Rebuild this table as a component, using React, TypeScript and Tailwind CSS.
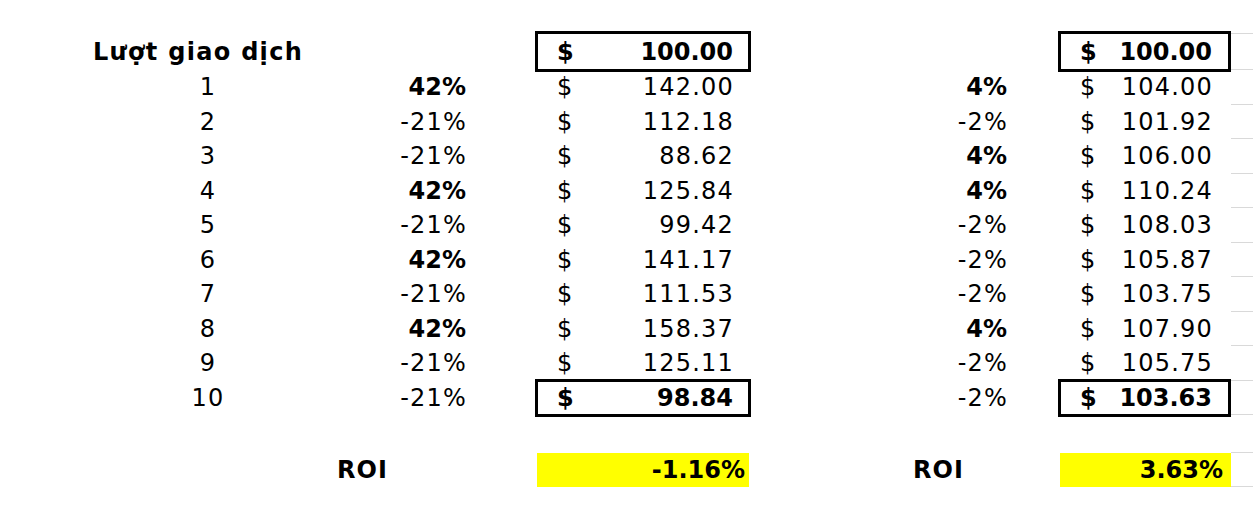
const leftPct = [42, -21, -21, 42, -21, 42, -21, 42, -21, -21];
const leftVal = ["142.00", "112.18", "88.62", "125.84", "99.42", "141.17", "111.53", "158.37", "125.11", "98.84"];
const rightPct = [4, -2, 4, 4, -2, -2, -2, 4, -2, -2];
const rightVal = ["104.00", "101.92", "106.00", "110.24", "108.03", "105.87", "103.75", "107.90", "105.75", "103.63"];

const Grid = () => <div className="border-b border-[#d9d9d9]" />;

const MoneyCell = ({ value, boxed, side }: { value: string; boxed: boolean; side: "l" | "r" }) => {
  let pad = "";
  if (side === "l") pad = boxed ? "pl-[19px] pr-[15px]" : "pl-[19px] pr-[14px]";
  else pad = boxed ? "pl-[19px] pr-[16px]" : "pl-[19px] pr-[15px]";
  return (
    <div
      className={`flex items-center justify-between border-[3px] ${pad} ${
        boxed ? "border-black -my-[2px] font-bold" : "border-transparent tracking-[1.2px]"
      }`}
    >
      <span>$</span>
      <span>{value}</span>
    </div>
  );
};

export default function App() {
  return (
    <div className="w-[1253px] h-[513px] bg-white overflow-hidden pt-[33px] text-black text-[24px] font-['DejaVu_Sans',sans-serif]">
      <div className="grid grid-cols-[93px_230px_212px_216px_307px_173px_22px] grid-rows-[37px_repeat(10,34.5px)_38px_34px]">
        {/* header row */}
        <div />
        <div className="flex items-center font-bold tracking-[1.3px] whitespace-nowrap">Lượt giao dịch</div>
        <div />
        <MoneyCell value="100.00" boxed side="l" />
        <div />
        <MoneyCell value="100.00" boxed side="r" />
        <div className="border-y border-[#d9d9d9]" />

        {leftVal.map((v, i) => (
          <div key={i} className="contents">
            <div />
            <div className="flex items-center justify-center tracking-[1.2px]">{i + 1}</div>
            <div
              className={`flex items-center justify-end ${
                leftPct[i] > 0 ? "font-bold pr-[69px]" : "tracking-[1.2px] pr-[68px]"
              }`}
            >
              {leftPct[i]}%
            </div>
            <MoneyCell value={v} boxed={i === 9} side="l" />
            <div
              className={`flex items-center justify-end ${
                rightPct[i] > 0 ? "font-bold pr-[51px]" : "tracking-[1.2px] pr-[50px]"
              }`}
            >
              {rightPct[i]}%
            </div>
            <MoneyCell value={rightVal[i]} boxed={i === 9} side="r" />
            <Grid />
          </div>
        ))}

        {/* empty row */}
        <div />
        <div />
        <div />
        <div />
        <div />
        <div />
        <Grid />

        {/* ROI row */}
        <div />
        <div />
        <div className="flex items-center pl-[14px] font-bold tracking-[1px]">ROI</div>
        <div className="flex items-center justify-end bg-[#ffff00] mx-[2px] pr-[4px] font-bold">-1.16%</div>
        <div className="flex items-center pl-[162px] font-bold tracking-[1px]">ROI</div>
        <div className="flex items-center justify-end bg-[#ffff00] ml-[2px] pr-[8px] font-bold">3.63%</div>
        <Grid />
      </div>
    </div>
  );
}
